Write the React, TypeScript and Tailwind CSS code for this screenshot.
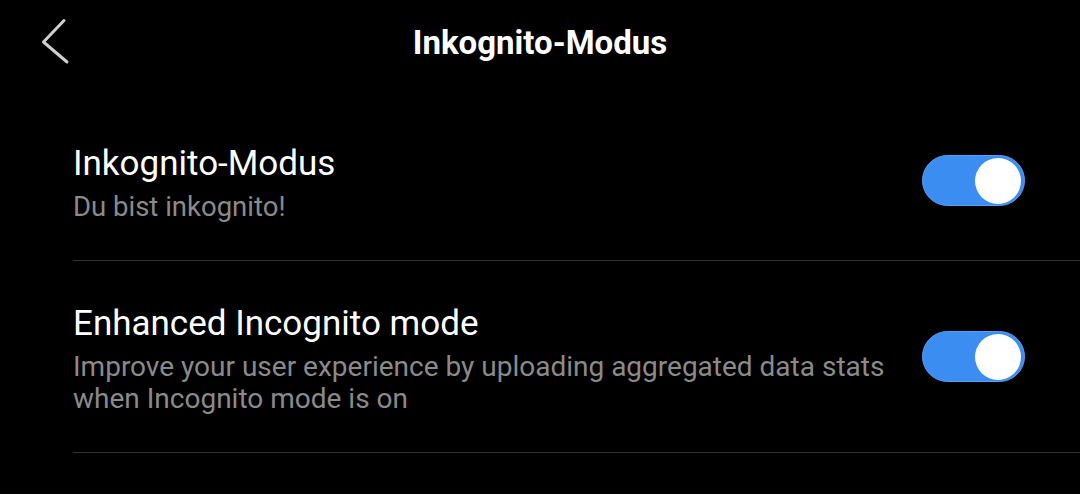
import React from "react";

function Toggle({ className = "" }: { className?: string }) {
  return (
    <div className={"w-[103px] h-[51px] rounded-full bg-[#3b8df1] border border-[#5a9ff0] flex items-center justify-end pr-[3px] shrink-0 " + className}>
      <div className="w-[46px] h-[46px] rounded-full bg-white" />
    </div>
  );
}

export default function App() {
  return (
    <div className="w-[1080px] h-[494px] bg-black text-white overflow-hidden" style={{ fontFamily: "Roboto, 'Noto Sans', sans-serif" }}>
      <div className="relative h-[84px] flex items-center justify-center">
        <svg className="absolute left-[40px] top-[18px]" width="32" height="48" viewBox="0 0 32 48">
          <path d="M24 2.5 L3.5 24 L27 44" fill="none" stroke="#cfcfcf" strokeWidth="3" strokeLinecap="round" strokeLinejoin="round" />
        </svg>
        <div className="text-[33px] font-bold leading-none">Inkognito-Modus</div>
      </div>
      <div className="pl-[73px]">
        <div className="flex items-start border-b border-[#333333] pt-[60px] pb-[37px]">
          <div className="flex-1">
            <div className="text-[35px] leading-[40px]">Inkognito-Modus</div>
            <div className="text-[27.5px] leading-[32px] text-[#8a8a8a] mt-[7px]">Du bist inkognito!</div>
          </div>
          <Toggle className="mt-[11px] mr-[55px]" />
        </div>
        <div className="flex items-start border-b border-[#333333] pt-[43px] pb-[37px]">
          <div className="flex-1">
            <div className="text-[35px] leading-[40px]">Enhanced Incognito mode</div>
            <div className="text-[28px] leading-[32px] text-[#8a8a8a] mt-[7px] w-[830px]">Improve your user experience by uploading aggregated data stats when Incognito mode is on</div>
          </div>
          <Toggle className="mt-[27px] mr-[55px]" />
        </div>
      </div>
    </div>
  );
}
